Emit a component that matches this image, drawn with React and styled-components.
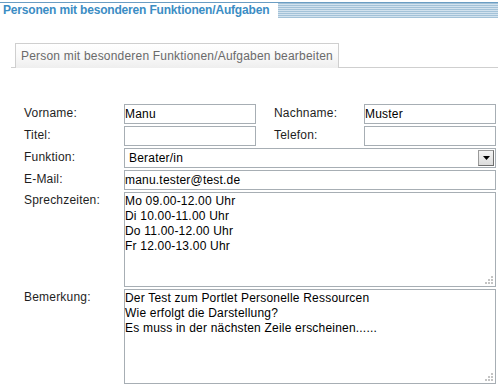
import React from 'react';
import styled, { createGlobalStyle } from 'styled-components';

const GlobalStyle = createGlobalStyle`
  body {
    margin: 0;
    background: #fff;
    font-family: "Liberation Sans", Arial, sans-serif;
  }
`;

const Page = styled.div`
  width: 498px;
  height: 387px;
  overflow: hidden;
  letter-spacing: 0.2px;
`;

const Header = styled.div`
  display: flex;
  align-items: stretch;
  margin-top: 2px;
  border-top: 1px solid #6a9dc3;
  height: 15px;
`;

const Title = styled.h1`
  margin: 0;
  padding: 0 0 0 3px;
  font-size: 12px;
  line-height: 15px;
  font-weight: 700;
  letter-spacing: -0.18px;
  color: #3b8dc4;
  white-space: nowrap;
`;

const Stripes = styled.div`
  flex: 1;
  margin-left: 9px;
  background: repeating-linear-gradient(
    to bottom,
    #a3c2d8 0px,
    #a3c2d8 1px,
    #d2e2ee 1px,
    #d2e2ee 2px
  );
`;

const TabBar = styled.div`
  display: flex;
  margin: 25px 0 0 11px;
  padding-left: 4px;
  border-bottom: 1px solid #cfcfcf;
`;

const Tab = styled.div`
  height: 24px;
  padding: 0 5px;
  border: 1px solid #cfcfcf;
  border-bottom: none;
  margin-bottom: -1px;
  background: linear-gradient(to bottom, #ffffff 0%, #f9f9f9 50%, #eeeeee 100%);
  font-size: 12px;
  line-height: 24px;
  color: #6a6a6a;
  white-space: nowrap;
`;

const Form = styled.div`
  display: grid;
  grid-template-columns: 100px 132px 18px 90px 132px;
  row-gap: 2px;
  margin: 36px 0 0 24px;
`;

const Label = styled.label`
  grid-column: ${(p) => p.col || 1};
  font-size: 12px;
  line-height: 15px;
  padding-top: ${(p) => (p.top ? '1px' : '2px')};
  color: #1e1e1e;
`;

const Input = styled.input`
  grid-column: ${(p) => p.col || 2} / span ${(p) => p.span || 1};
  box-sizing: border-box;
  height: 20px;
  margin: 0;
  padding: 0 1px 0 0;
  border: 1px solid #a7aeb4;
  font-family: inherit;
  font-size: 12px;
  letter-spacing: 0.2px;
  color: #000;
  background: #fff;
  outline: none;
`;

const SelectBox = styled.div`
  grid-column: 2 / span 4;
  box-sizing: border-box;
  height: 20px;
  border: 1px solid #a7aeb4;
  display: flex;
  align-items: center;
  justify-content: space-between;
  padding: 0 1px 0 4px;
  font-size: 12px;
  color: #000;
`;

const DropButton = styled.div`
  box-sizing: border-box;
  width: 16px;
  height: 16px;
  border: 1px solid #6e6e6e;
  border-top-color: #9a9a9a;
  border-left-color: #9a9a9a;
  background: linear-gradient(to bottom, #f4f4f4, #dcdcdc);
  display: flex;
  align-items: center;
  justify-content: center;
`;

const Area = styled.div`
  grid-column: 2 / span 4;
  box-sizing: border-box;
  position: relative;
  height: 95px;
  border: 1px solid #a7aeb4;
  padding: 1px 1px 1px 0;
  font-size: 12px;
  line-height: 15px;
  color: #000;
`;

const Grip = styled.svg`
  position: absolute;
  right: 1px;
  bottom: 1px;
`;

const ResizeGrip = () => (
  <Grip width="10" height="10" viewBox="0 0 10 10">
    <g fill="#c4c4c4">
      <rect x="7" y="1" width="2" height="2" />
      <rect x="4" y="4" width="2" height="2" />
      <rect x="7" y="4" width="2" height="2" />
      <rect x="1" y="7" width="2" height="2" />
      <rect x="4" y="7" width="2" height="2" />
      <rect x="7" y="7" width="2" height="2" />
    </g>
  </Grip>
);

const TextArea = ({ lines }) => (
  <Area>
    {lines.map((l) => (
      <div key={l}>{l}</div>
    ))}
    <ResizeGrip />
  </Area>
);

export default function App() {
  return (
    <Page>
      <GlobalStyle />
      <Header>
        <Title>Personen mit besonderen Funktionen/Aufgaben</Title>
        <Stripes />
      </Header>
      <TabBar>
        <Tab>Person mit besonderen Funktionen/Aufgaben bearbeiten</Tab>
      </TabBar>
      <Form>
        <Label>Vorname:</Label>
        <Input defaultValue="Manu" />
        <Label col={4}>Nachname:</Label>
        <Input col={5} defaultValue="Muster" />

        <Label>Titel:</Label>
        <Input defaultValue="" />
        <Label col={4}>Telefon:</Label>
        <Input col={5} defaultValue="" />

        <Label>Funktion:</Label>
        <SelectBox>
          <span>Berater/in</span>
          <DropButton>
            <svg width="7" height="4" viewBox="0 0 7 4">
              <path d="M0 0H7L3.5 4Z" fill="#000" />
            </svg>
          </DropButton>
        </SelectBox>

        <Label>E-Mail:</Label>
        <Input span={4} defaultValue="manu.tester@test.de" />

        <Label top>Sprechzeiten:</Label>
        <TextArea
          lines={[
            'Mo 09.00-12.00 Uhr',
            'Di 10.00-11.00 Uhr',
            'Do 11.00-12.00 Uhr',
            'Fr 12.00-13.00 Uhr',
          ]}
        />

        <Label top>Bemerkung:</Label>
        <TextArea
          lines={[
            'Der Test zum Portlet Personelle Ressourcen',
            'Wie erfolgt die Darstellung?',
            'Es muss in der nächsten Zeile erscheinen......',
          ]}
        />
      </Form>
    </Page>
  );
}
